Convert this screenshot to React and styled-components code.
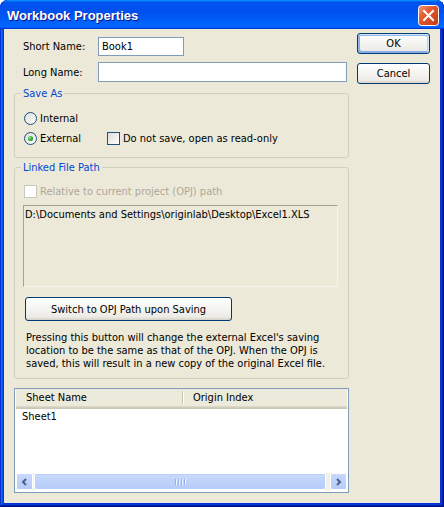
import React from "react"
import styled, { createGlobalStyle } from "styled-components"

const GlobalStyle = createGlobalStyle`
  html, body {
    margin: 0;
    padding: 0;
    background: #fff;
  }
  body {
    font-family: "DejaVu Sans Condensed", "DejaVu Sans", "Liberation Sans", sans-serif;
    font-stretch: condensed;
    font-size: 11px;
    color: #000;
  }
`

const Window = styled.div`
  width: 444px;
  height: 507px;
  box-sizing: border-box;
  display: flex;
  flex-direction: column;
  background: #0831d9;
  border-radius: 8px 8px 0 0;
  padding-bottom: 4px;
  overflow: hidden;
  box-shadow: inset -1px -1px #00138c, inset 1px 1px #0831d9, inset -2px -2px #001ea0,
    inset 2px 2px #166aee, inset -3px -3px #003bda, inset 3px 3px #0855dd;
`

const TitleBar = styled.div`
  height: 29px;
  flex: none;
  display: flex;
  align-items: center;
  justify-content: space-between;
  padding: 2px 5px 0 7px;
  box-sizing: border-box;
  border-radius: 8px 8px 0 0;
  background: linear-gradient(180deg, #0997ff, #0053ee 8%, #0050ee 40%, #06f 88%, #06f 93%, #005bff 95%, #003dd7 96%, #003dd7);
`

const Title = styled.div`
  font-family: "Liberation Sans", Arial, sans-serif;
  font-stretch: normal;
  font-weight: bold;
  font-size: 13px;
  color: #fff;
  text-shadow: 1px 1px #0f1089;
`

const Body = styled.div`
  flex: 1;
  margin: 0 4px;
  background: #ece9d8;
  display: flex;
  padding-left: 10px;
`

const LeftCol = styled.div`
  width: 335px;
  display: flex;
  flex-direction: column;
`

const RightCol = styled.div`
  display: flex;
  flex-direction: column;
  gap: 9px;
  margin-left: 8px;
  padding-top: 4px;
`

const FieldRow = styled.div`
  display: flex;
  align-items: center;
  margin-top: ${p => p.$top}px;
  padding-left: 9px;
`

const Label = styled.div`
  width: 75px;
`

const TextBox = styled.div`
  width: ${p => p.$w}px;
  height: ${p => p.$h}px;
  box-sizing: border-box;
  border: 1px solid #7f9db9;
  background: #fff;
  padding-left: 3px;
  display: flex;
  align-items: center;
`

const GroupBox = styled.div`
  margin-top: ${p => p.$top}px;
  border: 1px solid #d0d0bf;
  border-radius: 3px;
  display: flex;
  flex-direction: column;
  align-items: flex-start;
  padding: 0 0 ${p => p.$bottom}px 9px;
`

const GroupTitle = styled.div`
  margin: -7px 0 0 -3px;
  padding: 0 2px;
  line-height: 13px;
  background: #ece9d8;
  color: #0046d5;
`

const OptionRow = styled.div`
  display: flex;
  align-items: center;
  height: 15px;
  margin-top: ${p => p.$top}px;
`

const Option = styled.div`
  display: flex;
  align-items: center;
  width: ${p => (p.$w ? `${p.$w}px` : "auto")};
  color: ${p => (p.$disabled ? "#aca899" : "#000")};
`

const Radio = styled.span`
  width: 13px;
  height: 13px;
  box-sizing: border-box;
  border: 1px solid #1c5180;
  border-radius: 50%;
  background: linear-gradient(135deg, #dcdcd7, #fff);
  margin-right: 3px;
  display: flex;
  align-items: center;
  justify-content: center;

  &::after {
    content: "";
    display: ${p => (p.$checked ? "block" : "none")};
    width: 5px;
    height: 5px;
    border-radius: 50%;
    background: radial-gradient(circle at 35% 35%, #8de08d, #21a121 60%, #1a8a1a);
  }
`

const Check = styled.span`
  width: 13px;
  height: 13px;
  box-sizing: border-box;
  border: 1px solid ${p => (p.$disabled ? "#cac8bb" : "#1c5180")};
  background: ${p => (p.$disabled ? "#fff" : "linear-gradient(135deg, #dcdcd7, #fff)")};
  margin-right: 3px;
`

const PathBox = styled.div`
  margin: 6px 0 0 -1px;
  width: 315px;
  height: 82px;
  box-sizing: border-box;
  border: 1px solid;
  border-color: #a5a296 #f4f3ee #f4f3ee #a5a296;
  padding: 2px 0 0 1px;
  line-height: 13px;
`

const Button = styled.div`
  width: ${p => p.$w}px;
  height: ${p => p.$h}px;
  box-sizing: border-box;
  margin: ${p => p.$margin || "0"};
  border: 1px solid #003c74;
  border-radius: 3px;
  background: linear-gradient(180deg, #fff, #ecebe6 86%, #d6d0c5);
  display: flex;
  align-items: center;
  justify-content: center;
  box-shadow: ${p =>
    p.$default
      ? "inset -1px 1px #cee7ff, inset 1px 2px #98b8ea, inset -2px 2px #bcd4f6, inset 1px -1px #89ade4, inset 2px -2px #89ade4"
      : "none"};
`

const Description = styled.div`
  margin: 10px 0 0 2px;
  line-height: 13px;
`

const ListView = styled.div`
  margin-top: 9px;
  height: 105px;
  box-sizing: border-box;
  border: 1px solid #7f9db9;
  padding: 0 1px 1px;
  background: #fff;
  display: flex;
  flex-direction: column;
`

const Header = styled.div`
  height: 20px;
  flex: none;
  display: flex;
  align-items: center;
  background: linear-gradient(180deg, #ebeadb 0, #ebeadb 17px, #e2decd 17px, #d6d2c2 18px, #cbc7b8 19px);
  padding-bottom: 3px;
  box-sizing: border-box;
`

const HeaderCell = styled.div`
  width: ${p => (p.$w ? `${p.$w}px` : "auto")};
  box-sizing: border-box;
  padding-left: ${p => p.$pad}px;
  height: 17px;
  line-height: 17px;
  display: flex;
  justify-content: space-between;
`

const Divider = styled.span`
  width: 1px;
  height: 13px;
  margin-top: 2px;
  background: #c7c5b2;
  box-shadow: 1px 0 #fff;
`

const Rows = styled.div`
  flex: 1;
`

const Row = styled.div`
  height: 16px;
  line-height: 16px;
  padding-left: 6px;
`

const ScrollBar = styled.div`
  height: 17px;
  flex: none;
  display: flex;
  align-items: stretch;
  background: #f0efe8;
  margin-bottom: 1px;
`

const ScrollBtn = styled.div`
  width: 17px;
  box-sizing: border-box;
  border: 1px solid #fff;
  border-radius: 2px;
  background: linear-gradient(180deg, #c8d8fd, #b6cbf8);
  display: flex;
  align-items: center;
  justify-content: center;
`

const Thumb = styled.div`
  flex: 1;
  margin: 0 4px 0 1px;
  box-sizing: border-box;
  border: 1px solid #fff;
  border-radius: 2px;
  background: linear-gradient(180deg, #c9dafd, #b5cbf9);
  box-shadow: inset 0 0 0 1px #b8cff9;
  display: flex;
  align-items: center;
  justify-content: center;
  gap: 1px;
`

const Grip = styled.span`
  width: 1px;
  height: 6px;
  background: #8cb0f8;
  box-shadow: 1px 0 #eef4fe;
  margin-right: 1px;
`

function CloseIcon() {
  return (
    <svg width="21" height="21" viewBox="0 0 21 21">
      <defs>
        <linearGradient id="cg" x1="0" y1="0" x2="1" y2="1">
          <stop offset="0" stopColor="#ef9b7f" />
          <stop offset="0.4" stopColor="#e2582f" />
          <stop offset="1" stopColor="#c03a14" />
        </linearGradient>
      </defs>
      <rect x="0.5" y="0.5" width="20" height="20" rx="3" fill="url(#cg)" stroke="#fff" />
      <path d="M6 6 L15 15 M15 6 L6 15" stroke="#fff" strokeWidth="2" strokeLinecap="square" />
    </svg>
  )
}

function Arrow({ dir }) {
  const d = dir === "left" ? "M5 1 L2 4 L5 7" : "M2 1 L5 4 L2 7"
  return (
    <svg width="7" height="8" viewBox="0 0 7 8">
      <path d={d} stroke="#4d6185" strokeWidth="2" fill="none" />
    </svg>
  )
}

export default function App() {
  return (
    <>
      <GlobalStyle />
      <Window>
        <TitleBar>
          <Title>Workbook Properties</Title>
          <CloseIcon />
        </TitleBar>
        <Body>
          <LeftCol>
            <FieldRow $top={8}>
              <Label>Short Name:</Label>
              <TextBox $w={86} $h={19}>Book1</TextBox>
            </FieldRow>
            <FieldRow $top={6}>
              <Label>Long Name:</Label>
              <TextBox $w={249} $h={20} />
            </FieldRow>

            <GroupBox $top={11} $bottom={11}>
              <GroupTitle>Save As</GroupTitle>
              <OptionRow $top={11}>
                <Option>
                  <Radio />
                  Internal
                </Option>
              </OptionRow>
              <OptionRow $top={5}>
                <Option $w={83}>
                  <Radio $checked />
                  External
                </Option>
                <Option>
                  <Check />
                  Do not save, open as read-only
                </Option>
              </OptionRow>
            </GroupBox>

            <GroupBox $top={9} $bottom={8}>
              <GroupTitle>Linked File Path</GroupTitle>
              <OptionRow $top={10}>
                <Option $disabled>
                  <Check $disabled />
                  Relative to current project (OPJ) path
                </Option>
              </OptionRow>
              <PathBox>D:\Documents and Settings\originlab\Desktop\Excel1.XLS</PathBox>
              <Button $w={207} $h={24} $margin="10px 0 0 1px">
                Switch to OPJ Path upon Saving
              </Button>
              <Description>
                Pressing this button will change the external Excel's saving
                <br />
                location to be the same as that of the OPJ. When the OPJ is
                <br />
                saved, this will result in a new copy of the original Excel file.
              </Description>
            </GroupBox>

            <ListView>
              <Header>
                <HeaderCell $w={167} $pad={10}>
                  Sheet Name
                  <Divider />
                </HeaderCell>
                <HeaderCell $pad={10}>Origin Index</HeaderCell>
              </Header>
              <Rows>
                <Row>Sheet1</Row>
              </Rows>
              <ScrollBar>
                <ScrollBtn>
                  <Arrow dir="left" />
                </ScrollBtn>
                <Thumb>
                  <Grip />
                  <Grip />
                  <Grip />
                  <Grip />
                </Thumb>
                <ScrollBtn>
                  <Arrow dir="right" />
                </ScrollBtn>
              </ScrollBar>
            </ListView>
          </LeftCol>

          <RightCol>
            <Button $w={73} $h={21} $default>
              OK
            </Button>
            <Button $w={73} $h={21}>
              Cancel
            </Button>
          </RightCol>
        </Body>
      </Window>
    </>
  )
}
